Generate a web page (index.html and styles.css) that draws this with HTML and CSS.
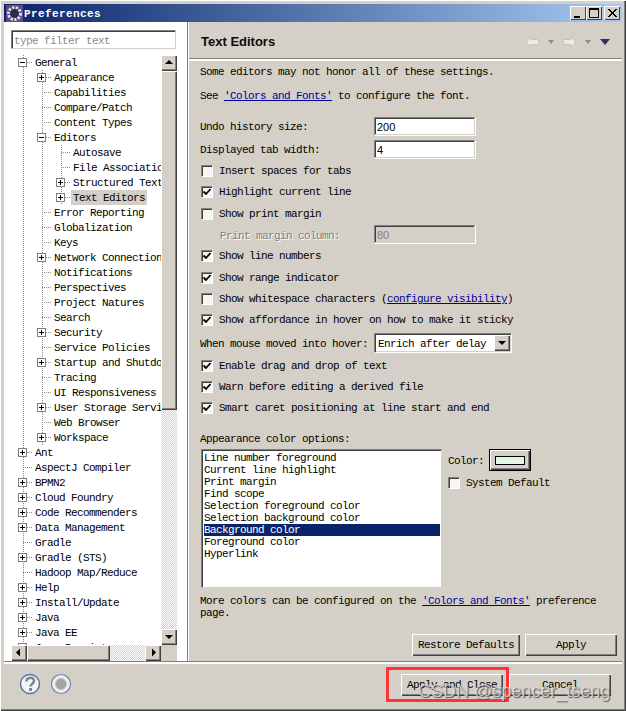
FILE: index.html
```html
<!DOCTYPE html>
<html lang="en">
<head>
<meta charset="utf-8">
<title>Preferences</title>
<link rel="stylesheet" href="styles.css">
</head>
<body>
<div class="window">
  <div class="titlebar">
    <svg class="app-icon" width="17" height="17" viewBox="0 0 17 17"><rect width="17" height="17" fill="#5b4a8c"/><circle cx="8.5" cy="8.5" r="6" fill="none" stroke="#e4e0dc" stroke-width="3" stroke-dasharray="2.2 1.4"/><circle cx="8.5" cy="8.5" r="4.4" fill="#2c2a50"/></svg>
    <span class="title">Preferences</span>
    <div class="caption">
      <span class="cap-btn"><svg width="16" height="14" viewBox="0 0 16 14"><path d="M4 10h6v2H4z" fill="#000"/></svg></span>
      <span class="cap-btn"><svg width="16" height="14" viewBox="0 0 16 14"><path d="M3.5 2.5h9v9h-9z M3 3.5h10" fill="none" stroke="#000"/><path d="M3 2h10v2H3z" fill="#000"/></svg></span>
      <span class="cap-btn cap-close"><svg width="16" height="14" viewBox="0 0 16 14"><path d="M4 3l8 8M5 3l8 8M12 3l-8 8M13 3l-8 8" stroke="#000" fill="none"/></svg></span>
    </div>
  </div>
  <div class="main">
    <div class="left">
      <div class="filter">type filter text</div>
      <div class="treebox">
        <div class="viewport">
          <div class="tree">
            <div class="node l0"><span class="tw minus"><i></i></span><span class="lbl">General</span></div>
            <div class="kids k1">
              <div class="node l1"><span class="tw plus"><i></i></span><span class="lbl">Appearance</span></div>
              <div class="node l1"><span class="tw leaf"><i></i></span><span class="lbl">Capabilities</span></div>
              <div class="node l1"><span class="tw leaf"><i></i></span><span class="lbl">Compare/Patch</span></div>
              <div class="node l1"><span class="tw leaf"><i></i></span><span class="lbl">Content Types</span></div>
              <div class="node l1"><span class="tw minus"><i></i></span><span class="lbl">Editors</span></div>
              <div class="kids k2">
                <div class="node l2"><span class="tw leaf"><i></i></span><span class="lbl">Autosave</span></div>
                <div class="node l2"><span class="tw leaf"><i></i></span><span class="lbl">File Associations</span></div>
                <div class="node l2"><span class="tw plus"><i></i></span><span class="lbl">Structured Text Editors</span></div>
                <div class="node l2"><span class="tw plus"><i></i></span><span class="lbl sel">Text Editors</span></div>
              </div>
              <div class="node l1"><span class="tw leaf"><i></i></span><span class="lbl">Error Reporting</span></div>
              <div class="node l1"><span class="tw leaf"><i></i></span><span class="lbl">Globalization</span></div>
              <div class="node l1"><span class="tw leaf"><i></i></span><span class="lbl">Keys</span></div>
              <div class="node l1"><span class="tw plus"><i></i></span><span class="lbl">Network Connections</span></div>
              <div class="node l1"><span class="tw leaf"><i></i></span><span class="lbl">Notifications</span></div>
              <div class="node l1"><span class="tw leaf"><i></i></span><span class="lbl">Perspectives</span></div>
              <div class="node l1"><span class="tw leaf"><i></i></span><span class="lbl">Project Natures</span></div>
              <div class="node l1"><span class="tw leaf"><i></i></span><span class="lbl">Search</span></div>
              <div class="node l1"><span class="tw plus"><i></i></span><span class="lbl">Security</span></div>
              <div class="node l1"><span class="tw leaf"><i></i></span><span class="lbl">Service Policies</span></div>
              <div class="node l1"><span class="tw plus"><i></i></span><span class="lbl">Startup and Shutdown</span></div>
              <div class="node l1"><span class="tw leaf"><i></i></span><span class="lbl">Tracing</span></div>
              <div class="node l1"><span class="tw leaf"><i></i></span><span class="lbl">UI Responsiveness</span></div>
              <div class="node l1"><span class="tw plus"><i></i></span><span class="lbl">User Storage Service</span></div>
              <div class="node l1"><span class="tw leaf"><i></i></span><span class="lbl">Web Browser</span></div>
              <div class="node l1"><span class="tw plus"><i></i></span><span class="lbl">Workspace</span></div>
            </div>
            <div class="node l0"><span class="tw plus"><i></i></span><span class="lbl">Ant</span></div>
            <div class="node l0"><span class="tw leaf"><i></i></span><span class="lbl">AspectJ Compiler</span></div>
            <div class="node l0"><span class="tw plus"><i></i></span><span class="lbl">BPMN2</span></div>
            <div class="node l0"><span class="tw plus"><i></i></span><span class="lbl">Cloud Foundry</span></div>
            <div class="node l0"><span class="tw plus"><i></i></span><span class="lbl">Code Recommenders</span></div>
            <div class="node l0"><span class="tw plus"><i></i></span><span class="lbl">Data Management</span></div>
            <div class="node l0"><span class="tw leaf"><i></i></span><span class="lbl">Gradle</span></div>
            <div class="node l0"><span class="tw plus"><i></i></span><span class="lbl">Gradle (STS)</span></div>
            <div class="node l0"><span class="tw leaf"><i></i></span><span class="lbl">Hadoop Map/Reduce</span></div>
            <div class="node l0"><span class="tw plus"><i></i></span><span class="lbl">Help</span></div>
            <div class="node l0"><span class="tw plus"><i></i></span><span class="lbl">Install/Update</span></div>
            <div class="node l0"><span class="tw plus"><i></i></span><span class="lbl">Java</span></div>
            <div class="node l0"><span class="tw plus"><i></i></span><span class="lbl">Java EE</span></div>
            <div class="node l0"><span class="tw plus"><i></i></span><span class="lbl">Java Persistence</span></div>
          </div>
        </div>
        <div class="vbar">
          <span class="sb-btn"><svg width="16" height="16" viewBox="0 0 16 16"><path d="M8 5l4 4H4z" fill="#000"/></svg></span>
          <span class="vthumb"></span>
          <span class="track"></span>
          <span class="sb-btn"><svg width="16" height="16" viewBox="0 0 16 16"><path d="M8 10L4 6h8z" fill="#000"/></svg></span>
        </div>
        <div class="hbar">
          <span class="sb-btn"><svg width="16" height="15" viewBox="0 0 16 15"><path d="M5 7.5L9 3.5v8z" fill="#000"/></svg></span>
          <span class="hthumb"></span>
          <span class="track"></span>
          <span class="sb-btn"><svg width="16" height="15" viewBox="0 0 16 15"><path d="M11 7.5L7 3.5v8z" fill="#000"/></svg></span>
        </div>
        <div class="corner"></div>
      </div>
    </div>
    <div class="right">
      <div class="head">
        <span class="head-title">Text Editors</span>
        <div class="nav">
          <svg width="15" height="12" viewBox="0 0 15 12"><path d="M6.500 1L1 6l5.500 5V8.500h7v-5h-7z" fill="#ecebe8" stroke="#c4c2bc"/></svg>
          <svg class="tri" width="6" height="4" viewBox="0 0 6 4"><path d="M0 0h6L3 4z" fill="#8e8c88"/></svg>
          <svg width="15" height="12" viewBox="0 0 15 12"><path d="M8.500 1L14 6l-5.500 5V8.500h-7v-5h7z" fill="#ecebe8" stroke="#c4c2bc"/></svg>
          <svg class="tri" width="6" height="4" viewBox="0 0 6 4"><path d="M0 0h6L3 4z" fill="#8e8c88"/></svg>
          <svg class="tri-menu" width="10" height="6" viewBox="0 0 10 6"><path d="M0 0h10L5 6z" fill="#3c2a66"/></svg>
        </div>
      </div>
      <div class="content">
        <p class="line">Some editors may not honor all of these settings.</p>
        <p class="line see">See <a class="link">'Colors and Fonts'</a> to configure the font.</p>
        <div class="field undo"><span class="flabel">Undo history size:</span><span class="input">200</span></div>
        <div class="field tabw"><span class="flabel">Displayed tab width:</span><span class="input">4</span></div>
        <div class="checks first">
          <div class="check"><span class="box"></span>Insert spaces for tabs</div>
          <div class="check"><span class="box on"></span>Highlight current line</div>
          <div class="check"><span class="box"></span>Show print margin</div>
          <div class="field indent"><span class="flabel disabled">Print margin column:</span><span class="input off">80</span></div>
          <div class="check"><span class="box on"></span>Show line numbers</div>
          <div class="check"><span class="box on"></span>Show range indicator</div>
          <div class="check"><span class="box"></span>Show whitespace characters (<a class="link">configure visibility</a>)</div>
          <div class="check"><span class="box on"></span>Show affordance in hover on how to make it sticky</div>
        </div>
        <div class="field hover"><span class="flabel">When mouse moved into hover:</span>
          <span class="combo"><span class="combo-text">Enrich after delay</span><span class="combo-btn"><svg width="16" height="16" viewBox="0 0 16 16"><path d="M4 6h8l-4 4z" fill="#000"/></svg></span></span>
        </div>
        <div class="checks second">
          <div class="check"><span class="box on"></span>Enable drag and drop of text</div>
          <div class="check"><span class="box on"></span>Warn before editing a derived file</div>
          <div class="check"><span class="box on"></span>Smart caret positioning at line start and end</div>
        </div>
        <p class="line appearance">Appearance color options:</p>
        <div class="colors">
          <div class="list">
            <div class="item">Line number foreground</div>
            <div class="item">Current line highlight</div>
            <div class="item">Print margin</div>
            <div class="item">Find scope</div>
            <div class="item">Selection foreground color</div>
            <div class="item">Selection background color</div>
            <div class="item picked">Background color</div>
            <div class="item">Foreground color</div>
            <div class="item">Hyperlink</div>
          </div>
          <div class="color-side">
            <div class="color-row"><span class="color-label">Color:</span><span class="color-btn"><span class="swatch"></span></span></div>
            <div class="check sys"><span class="box"></span>System Default</div>
          </div>
        </div>
        <p class="line more">More colors can be configured on the <a class="link">'Colors and Fonts'</a> preference page.</p>
        <div class="actions">
          <span class="btn restore">Restore Defaults</span>
          <span class="btn apply">Apply</span>
        </div>
      </div>
    </div>
  </div>
  <div class="footer">
    <svg class="help" width="22" height="22" viewBox="0 0 22 22"><circle cx="11" cy="11" r="9.500" fill="#f4f5f8" stroke="#5a74a8" stroke-width="1.500"/><path d="M7.500 8.500c0-5 7.500-5 7.500-.5 0 3-3.500 3-3.500 5.500" fill="none" stroke="#7d8591" stroke-width="2.500"/><rect x="10" y="15" width="3" height="3" fill="#7d8591"/></svg>
    <svg class="rec" width="22" height="22" viewBox="0 0 22 22"><circle cx="11" cy="11" r="9.500" fill="#eeeff2" stroke="#6f84ad" stroke-width="1.200"/><circle cx="11" cy="11" r="5.500" fill="#a3a3a1" stroke="#c0bfba"/></svg>
    <span class="btn ok">Apply and Close</span>
    <span class="btn cancel">Cancel</span>
  </div>
  <div class="redbox"></div>
  <div class="watermark">CSDN @spencer_tseng</div>
</div>
</body>
</html>
```
FILE: styles.css
```css
* { box-sizing: border-box; }
html, body { margin: 0; padding: 0; }
body {
  width: 626px;
  height: 711px;
  overflow: hidden;
  font-family: "Liberation Mono", monospace;
  font-size: 11px;
  letter-spacing: -0.6px;
  line-height: 12px;
  color: #000;
}
p { margin: 0; }
.window {
  position: relative;
  width: 626px;
  height: 711px;
  padding: 4px 4px 1px;
  background: #d4d0c8;
  display: flex;
  flex-direction: column;
  box-shadow: inset 1px 1px 0 #fff, inset -1px -1px 0 #404040, inset -2px -2px 0 #808080;
}
.titlebar {
  height: 18px;
  flex: none;
  display: flex;
  align-items: center;
  padding-left: 2px;
  background: linear-gradient(90deg, #0a246a, #a6caf0);
}
.app-icon { flex: none; }
.title {
  margin-left: 1px;
  padding-top: 2px;
  color: #fff;
  font-weight: 700;
  letter-spacing: 0.4px;
}
.caption { margin-left: auto; display: flex; padding-right: 2px; }
.cap-btn {
  width: 16px;
  height: 14px;
  background: #d4d0c8;
  box-shadow: inset 1px 1px 0 #fff, inset -1px -1px 0 #404040;
  display: block;
}
.cap-btn svg { display: block; }
.cap-close { margin-left: 2px; }
.main { flex: 1; display: flex; min-height: 0; }
.left {
  width: 183px;
  flex: none;
  background: #fff;
  padding: 8px 0 0 7px;
}
.filter {
  width: 165px;
  height: 19px;
  padding: 4px 0 0 2px;
  color: #8c8c8c;
  border: 1px solid #808080;
  border-right-color: #d4d0c8;
  border-bottom-color: #d4d0c8;
  box-shadow: inset 1px 1px 0 #404040;
}
.treebox {
  margin-top: 6px;
  width: 166px;
  height: 606px;
  display: grid;
  grid-template-columns: 150px 16px;
  grid-template-rows: 590px 16px;
}
.viewport { overflow: hidden; }
.tree {
  background: linear-gradient(#8c8c8c 50%, #fff 0) 12px 0 / 1px 2px repeat-y;
}
.kids { background: linear-gradient(#8c8c8c 50%, transparent 0) 0 0 / 1px 2px repeat-y; }
.k1 { background-position-x: 31px; }
.k2 { background-position-x: 50px; }
.node { display: flex; height: 15px; align-items: flex-start; white-space: nowrap; }
.l0 { padding-left: 7px; }
.l1 { padding-left: 26px; }
.l2 { padding-left: 45px; }
.tw { width: 17px; height: 15px; flex: none; display: block; position: relative; }
.tw i {
  display: block;
  position: absolute;
  left: 0;
  top: 3px;
  width: 9px;
  height: 9px;
  background-color: #fff;
  border: 1px solid #808080;
  background-image: linear-gradient(#000, #000);
  background-size: 5px 1px;
  background-position: 1px 3px;
  background-repeat: no-repeat;
}
.tw.plus i {
  background-image: linear-gradient(#000, #000), linear-gradient(#000, #000);
  background-size: 5px 1px, 1px 5px;
  background-position: 1px 3px, 3px 1px;
}
.tw.leaf i {
  left: 5px;
  top: 7px;
  width: 10px;
  height: 1px;
  border: 0;
  background: linear-gradient(90deg, #8c8c8c 50%, #fff 0) 0 0 / 2px 1px repeat-x;
}
.tw.plus::after, .tw.minus::after {
  content: "";
  position: absolute;
  left: 9px;
  top: 7px;
  width: 6px;
  height: 1px;
  background: linear-gradient(90deg, #8c8c8c 50%, #fff 0) 0 0 / 2px 1px repeat-x;
}
.lbl { height: 15px; line-height: 17px; padding: 0 2px; margin-left: -2px; background: #fff; }
.lbl.sel { background: #d4d0c8; }
.sb-btn {
  display: block;
  flex: none;
  width: 16px;
  height: 16px;
  background: #d4d0c8;
  box-shadow: inset 1px 1px 0 #fff, inset -1px -1px 0 #404040, inset -2px -2px 0 #808080;
}
.sb-btn svg { display: block; }
.vbar { display: flex; flex-direction: column; }
.hbar { display: flex; height: 16px; }
.hbar .sb-btn { height: 16px; }
.vthumb {
  height: 339px;
  background: #d4d0c8;
  box-shadow: inset 1px 1px 0 #fff, inset -1px -1px 0 #404040, inset -2px -2px 0 #808080;
}
.hthumb {
  width: 83px;
  background: #d4d0c8;
  box-shadow: inset 1px 1px 0 #fff, inset -1px -1px 0 #404040, inset -2px -2px 0 #808080;
}
.track {
  flex: 1;
  background: repeating-conic-gradient(#fff 0 25%, #d4d0c8 0 50%) 0 0 / 2px 2px;
}
.corner { background: #d4d0c8; }
.right {
  flex: 1;
  min-width: 0;
  display: flex;
  flex-direction: column;
  border-left: 1px solid #808080;
  box-shadow: inset 1px 0 0 #fff;
  padding-left: 2px;
}
.head {
  height: 39px;
  flex: none;
  display: flex;
  align-items: center;
  padding: 2px 0 0 12px;
  margin-left: -1px;
  border-bottom: 2px solid #fff;
  box-shadow: inset 0 -1px 0 #808080;
}
.head-title {
  font-family: "Liberation Sans", sans-serif;
  font-size: 13px;
  font-weight: 700;
  letter-spacing: 0;
  color: #0b0b0b;
}
.nav { margin-left: auto; display: flex; align-items: center; padding-right: 12px; }
.nav .tri { margin: 0 8px; }
.nav .tri-menu { margin-left: 1px; }
.content { padding: 5px 5px 0 11px; flex: 1; min-height: 0; margin-left: -1px; }
.line { height: 12px; white-space: nowrap; }
.see { margin-top: 12px; }
.link { color: #00009c; text-decoration: underline; }
.field { display: flex; align-items: center; }
.flabel { width: 174px; flex: none; padding-top: 2px; }
.undo { margin-top: 15px; }
.tabw { margin-top: 5px; }
.input {
  width: 101px;
  height: 18px;
  padding: 3px 0 0 2px;
  background: #fff;
  border: 1px solid #808080;
  border-right-color: #d4d0c8;
  border-bottom-color: #d4d0c8;
  box-shadow: inset 1px 1px 0 #404040, 1px 1px 0 #fff;
  font-family: "Liberation Sans", sans-serif;
  font-size: 11px;
  letter-spacing: 0;
}
.input.off { background: #d4d0c8; color: #808080; }
.flabel.disabled { color: #808080; text-shadow: 1px 1px 0 #fff; }
.checks { display: grid; grid-auto-rows: 21.3px; }
.checks.first { margin-top: 2.500px; }
.checks.second { margin-top: 2.100px; }
.check { display: flex; align-items: center; white-space: pre; padding-left: 1px; }
.indent { padding-left: 20px; }
.indent .flabel { width: 154px; }
.indent .input { margin-top: -3px; }
.box {
  width: 12px;
  height: 12px;
  flex: none;
  margin-right: 6px;
  border: 1px solid #808080;
  border-right-color: #fff;
  border-bottom-color: #fff;
  box-shadow: inset 1px 1px 0 #404040;
  background: #f6f5f2;
}
.box.on {
  background: #f6f5f2 url("data:image/svg+xml,%3Csvg xmlns='http://www.w3.org/2000/svg' width='10' height='10'%3E%3Cpath d='M1.500 4.500l2.500 2.500 4.500-5' fill='none' stroke='%23000' stroke-width='1.800'/%3E%3C/svg%3E") center no-repeat;
}
.hover { margin-top: 2.100px; }
.combo {
  width: 138px;
  height: 20px;
  display: flex;
  align-items: center;
  justify-content: space-between;
  background: #fff;
  border: 1px solid #808080;
  border-right-color: #fff;
  border-bottom-color: #fff;
  box-shadow: inset 1px 1px 0 #404040, inset -1px -1px 0 #d4d0c8;
  padding: 0 1px 0 3px;
}
.combo-text { padding-top: 2px; }
.combo-btn {
  width: 16px;
  height: 16px;
  background: #d4d0c8;
  box-shadow: inset 1px 1px 0 #fff, inset -1px -1px 0 #404040, inset -2px -2px 0 #808080;
}
.combo-btn svg { display: block; }
.appearance { margin-top: 14.100px; }
.colors { display: flex; margin-top: 4px; margin-left: 1px; }
.list {
  width: 241px;
  height: 139px;
  flex: none;
  background: #fff;
  padding: 2px 1px 0 2px;
  border: 1px solid #808080;
  border-right-color: #d4d0c8;
  border-bottom-color: #d4d0c8;
  box-shadow: inset 1px 1px 0 #404040;
}
.item { height: 12px; line-height: 12px; white-space: nowrap; }
.item.picked { background: #0a246a; color: #fff; }
.color-side { margin-left: 6px; }
.color-row { display: flex; align-items: center; }
.color-label { padding-top: 2px; }
.color-btn {
  margin-left: 5px;
  width: 42px;
  height: 22px;
  display: flex;
  align-items: center;
  justify-content: center;
  background: #d4d0c8;
  border: 1px solid #000;
  box-shadow: inset 1px 1px 0 #fff, inset -1px -1px 0 #404040, inset -2px -2px 0 #808080;
}
.swatch { width: 30px; height: 9px; background: #e3f5e3; border: 1px solid #000; }
.check.sys { margin-top: 6px; padding-left: 0; }
.more { margin-top: 7px; height: 24px; white-space: normal; width: 410px; }
.actions { display: flex; justify-content: flex-end; gap: 5px; margin-top: 15px; }
.btn {
  height: 22px;
  display: flex;
  align-items: center;
  justify-content: center;
  background: #d4d0c8;
  box-shadow: inset 1px 1px 0 #fff, inset -1px -1px 0 #404040, inset -2px -2px 0 #808080;
}
.restore { width: 108px; }
.apply { width: 92px; }
.footer {
  height: 48px;
  flex: none;
  display: flex;
  align-items: center;
  border-top: 2px solid #fff;
  box-shadow: 0 -1px 0 #808080;
  padding: 0 11px 4px 15px;
}
.help { margin-right: 9px; margin-bottom: 2px; }
.rec { margin-bottom: 2px; }
.ok { margin-left: auto; width: 102px; }
.cancel { margin-left: 6px; width: 102px; }
.redbox {
  position: absolute;
  left: 386px;
  top: 667px;
  width: 123px;
  height: 35px;
  border: 3px solid #f33;
}
.watermark {
  position: absolute;
  left: 418px;
  top: 681px;
  font-family: "Liberation Sans", sans-serif;
  font-size: 18px;
  line-height: 20px;
  letter-spacing: 0;
  white-space: nowrap;
  color: rgba(225, 225, 225, 0.8);
  text-shadow: 1px 1px 1px rgba(60, 60, 60, 0.8);
}
```
